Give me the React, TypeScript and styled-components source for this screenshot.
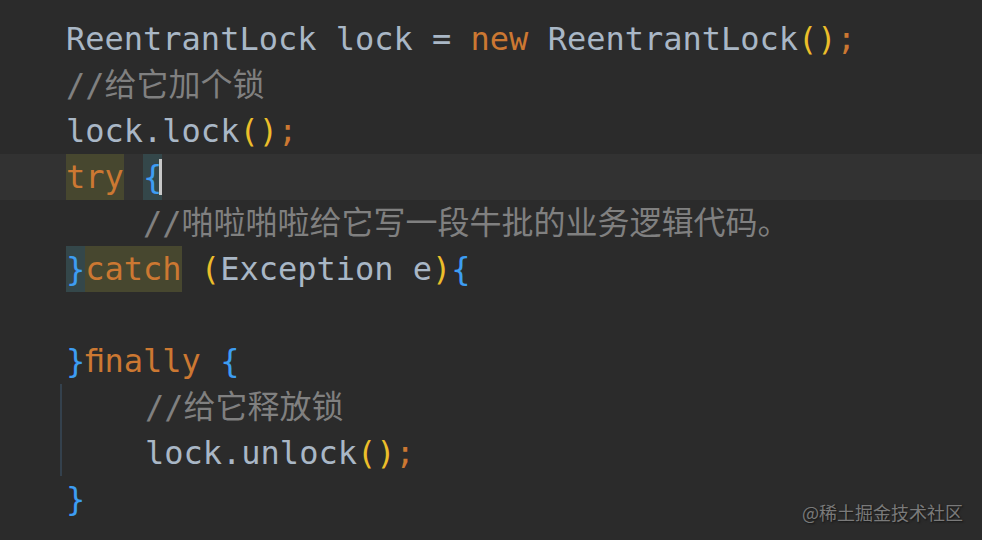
import React from "react";
import styled, { createGlobalStyle, css } from "styled-components";

const Global = createGlobalStyle`
  html, body { margin: 0; padding: 0; background: #2b2b2b; }
  #root { width: 982px; height: 540px; }
`;

const Editor = styled.div`
  position: relative;
  width: 982px;
  height: 540px;
  box-sizing: border-box;
  padding: 16px 0 0 0;
  background: #2b2b2b;
  font-family: "DejaVu Sans Mono", "Noto Sans CJK SC", monospace;
  font-size: 32px;
  overflow: hidden;
`;

const Line = styled.div<{ $indent?: number; $current?: boolean }>`
  height: 46px;
  line-height: 46px;
  white-space: pre;
  padding-left: ${(p) => 66 + (p.$indent ?? 0) * 77}px;
  background: ${(p) => (p.$current ? "#323232" : "transparent")};
  display: flex;
  align-items: stretch;
`;

const Block = styled.div`
  margin-left: 60px;
  border-left: 2px solid #34414d;
  & > div { padding-left: 83px; }
`;

type Kind = "id" | "kw" | "cm" | "paren" | "semi" | "brace";

const colors: Record<Kind, string> = {
  id: "#a9b7c6",
  kw: "#cc7832",
  cm: "#808080",
  paren: "#ecbe2a",
  semi: "#cc7832",
  brace: "#3d9df3",
};

const Tok = styled.span<{ $k: Kind; $hl?: "kw" | "br" }>`
  color: ${(p) => colors[p.$k]};
  font-family: ${(p) =>
    p.$k === "cm"
      ? `"DejaVu Sans Mono", "Noto Sans CJK SC", monospace`
      : `"DejaVu Sans Mono", monospace`};
  ${(p) =>
    p.$hl === "kw" &&
    css`
      background: #47472f;
    `}
  ${(p) =>
    p.$hl === "br" &&
    css`
      background: #34474a;
    `}
`;

const Caret = styled.span`
  display: inline-block;
  width: 3px;
  height: 36px;
  margin: 5px 0 0 -3px;
  background: #c8c8c8;
`;

const Watermark = styled.div`
  position: absolute;
  right: 19px;
  bottom: 17px;
  font-family: "Noto Sans CJK SC", sans-serif;
  font-size: 18px;
  line-height: 22px;
  color: #7a7a7a;
  text-shadow: 1px 1px 2px rgba(0, 0, 0, 0.6);
`;

export default function App() {
  return (
    <>
      <Global />
      <Editor>
        <Line>
          <Tok $k="id">ReentrantLock lock = </Tok>
          <Tok $k="kw">new </Tok>
          <Tok $k="id">ReentrantLock</Tok>
          <Tok $k="paren">()</Tok>
          <Tok $k="semi">;</Tok>
        </Line>
        <Line>
          <Tok $k="cm">//给它加个锁</Tok>
        </Line>
        <Line>
          <Tok $k="id">lock.lock</Tok>
          <Tok $k="paren">()</Tok>
          <Tok $k="semi">;</Tok>
        </Line>
        <Line $current>
          <Tok $k="kw" $hl="kw">try</Tok>
          <Tok $k="id"> </Tok>
          <Tok $k="brace" $hl="br">{"{"}</Tok>
          <Caret />
        </Line>
        <Line $indent={1}>
          <Tok $k="cm">//啪啦啪啦给它写一段牛批的业务逻辑代码。</Tok>
        </Line>
        <Line>
          <Tok $k="brace" $hl="br">{"}"}</Tok>
          <Tok $k="kw" $hl="kw">catch</Tok>
          <Tok $k="id"> </Tok>
          <Tok $k="paren">(</Tok>
          <Tok $k="id">Exception e</Tok>
          <Tok $k="paren">)</Tok>
          <Tok $k="brace">{"{"}</Tok>
        </Line>
        <Line />
        <Line>
          <Tok $k="brace">{"}"}</Tok>
          <Tok $k="kw">{"\uFB01nally "}</Tok>
          <Tok $k="brace">{"{"}</Tok>
        </Line>
        <Block>
          <Line>
            <Tok $k="cm">//给它释放锁</Tok>
          </Line>
          <Line>
            <Tok $k="id">lock.unlock</Tok>
            <Tok $k="paren">()</Tok>
            <Tok $k="semi">;</Tok>
          </Line>
        </Block>
        <Line>
          <Tok $k="brace">{"}"}</Tok>
        </Line>
        <Watermark>@稀土掘金技术社区</Watermark>
      </Editor>
    </>
  );
}
